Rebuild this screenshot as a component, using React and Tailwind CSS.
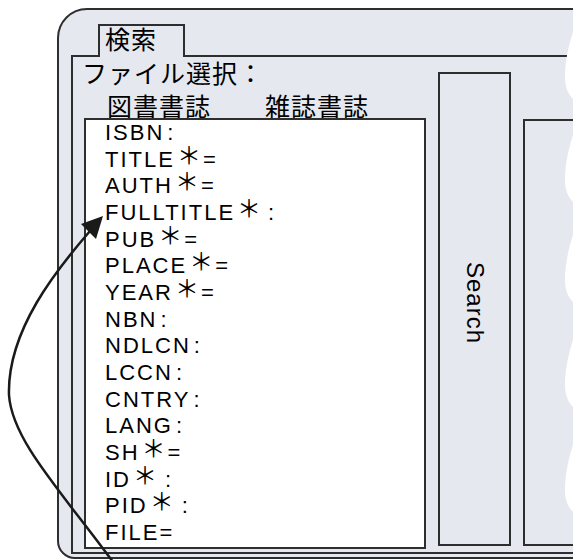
import React from 'react';

// tail: what follows the name (or the star), gap: px before the tail
const fields = [
    { name: 'ISBN', tail: ':', gap: 3 },
    { name: 'TITLE', star: true, tail: '=', gap: 2 },
    { name: 'AUTH', star: true, tail: '=', gap: 2 },
    { name: 'FULLTITLE', star: true, tail: ':', gap: 7 },
    { name: 'PUB', star: true, tail: '=', gap: 2 },
    { name: 'PLACE', star: true, tail: '=', gap: 2 },
    { name: 'YEAR', star: true, tail: '=', gap: 2 },
    { name: 'NBN', tail: ':', gap: 3 },
    { name: 'NDLCN', tail: ':', gap: 3 },
    { name: 'LCCN', tail: ':', gap: 3 },
    { name: 'CNTRY', tail: ':', gap: 3 },
    { name: 'LANG', tail: ':', gap: 3 },
    { name: 'SH', star: true, tail: '=', gap: 2 },
    { name: 'ID', star: true, tail: ':', gap: 8 },
    { name: 'PID', star: true, tail: ':', gap: 8 },
    { name: 'FILE', tail: '=', gap: 0 },
];

// white bulges of the torn right edge
const bulges = [77, 180, 280, 385, 490];
const wavePath = bulges
    .map((p) => `M573 ${p - 45} C568 ${p - 30} 565 ${p - 14} 565 ${p} C565 ${p + 10} 568 ${p + 17} 573 ${p + 22} Z`)
    .join(' ');

const jp = { fontFamily: '"Noto Sans CJK JP", "Noto Sans", sans-serif' };

export default function App() {
    return (
        <div className="relative w-[573px] h-[560px] overflow-hidden bg-white text-black" style={{ fontFamily: '"Liberation Sans", Arial, sans-serif' }}>
            {/* Outer rounded window */}
            <div className="ml-[57px] mt-[8px] h-[551px] w-[560px] flex flex-col rounded-tl-[30px] rounded-bl-[18px] border-2 border-[#2e2e2e] bg-[#e5e8ee] pl-[12px] pt-[14px] pb-[3px]">
                {/* Tab */}
                <div className="relative z-10 -mb-[2px] ml-[27px] h-[33px] w-[87px] border-2 border-b-0 border-[#2e2e2e] bg-[#e5e8ee] pl-[5px] text-[25px] leading-[25px] tracking-[1px]" style={jp}>
                    検索
                </div>

                {/* Tab body */}
                <div className="flex flex-1 min-h-0 border-2 border-r-0 border-[#2e2e2e]">
                    {/* File select + list */}
                    <div className="flex w-[353px] shrink-0 flex-col pt-[3px] pb-[6px]">
                        <div className="pl-[9px] text-[25px] leading-[24px] tracking-[1px] whitespace-nowrap" style={jp}>ファイル選択：</div>
                        <div className="mt-[9px] flex pl-[34px] text-[25px] leading-[24px] tracking-[1px] whitespace-nowrap" style={jp}>
                            <span>図書書誌</span>
                            <span className="ml-[54px]">雑誌書誌</span>
                        </div>
                        <div className="mt-[1px] ml-[11px] flex-1 border-2 border-[#2e2e2e] bg-white pl-[19px] text-[22px] leading-[26.67px] tracking-[2px]">
                            {fields.map((f) => (
                                <div key={f.name} className="flex items-baseline whitespace-nowrap">
                                    <span>{f.name}</span>
                                    {f.star && <span className="relative -top-[3px] ml-[2px] text-[24px] leading-[0] tracking-normal" style={jp}>＊</span>}
                                    <span style={{ marginLeft: f.gap }}>{f.tail}</span>
                                </div>
                            ))}
                        </div>
                    </div>

                    {/* Search button */}
                    <div className="ml-[12px] mt-[15px] mb-[6px] w-[73px] shrink-0 flex justify-center border-2 border-[#2e2e2e] bg-[#e5e8ee] pt-[188px]">
                        <span className="text-[24px] tracking-[1px] leading-none [writing-mode:vertical-rl]">Search</span>
                    </div>

                    {/* Result pane */}
                    <div className="ml-[12px] mt-[62px] mb-[6px] flex-1 border-2 border-[#2e2e2e] bg-[#e5e8ee]" />
                </div>
            </div>

            {/* Torn edge and pointer arrow */}
            <svg className="pointer-events-none absolute inset-0" width="573" height="560" viewBox="0 0 573 560">
                <path d={wavePath} fill="#fff" />
                <path d="M113 562 C60 490 12 440 9 395 C7 330 58 268 90 231" fill="none" stroke="#1a1a1a" strokeWidth="2.5" />
                <polygon points="103,216 81,224 96,239" fill="#1a1a1a" />
            </svg>
        </div>
    );
}
